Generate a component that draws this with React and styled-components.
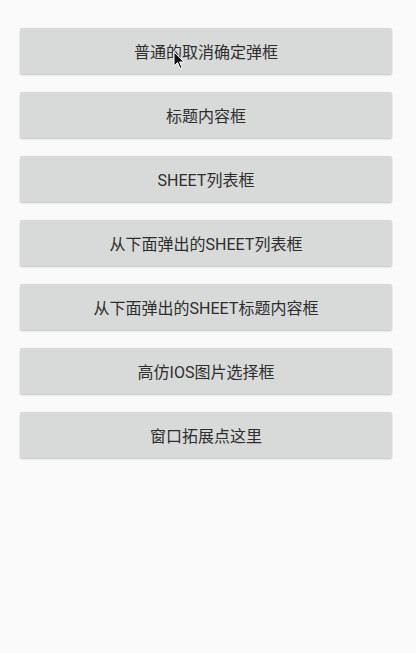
import React from 'react';
import styled, { createGlobalStyle } from 'styled-components';

const GlobalStyle = createGlobalStyle`
  html, body {
    margin: 0;
    padding: 0;
    background: #fafafa;
  }
  body {
    font-family: Roboto, 'Noto Sans CJK SC', sans-serif;
  }
`;

const Page = styled.div`
  position: relative;
  width: 416px;
  height: 653px;
  background: #fafafa;
  box-sizing: border-box;
  padding: 28px 24px 0 20px;
  display: flex;
  flex-direction: column;
  gap: 18px;
`;

const DialogButton = styled.button`
  height: 46px;
  width: 100%;
  border: none;
  border-radius: 2px;
  background: #d8d9d9;
  box-shadow: 0 1px 2px rgba(0, 0, 0, 0.22);
  font-family: Roboto, 'Noto Sans CJK SC', sans-serif;
  font-size: 16px;
  color: #2e2e2e;
  padding: 0;
  cursor: pointer;
`;

const Pointer = styled.svg`
  position: absolute;
  left: 173px;
  top: 51px;
  pointer-events: none;
`;

const labels = [
  '普通的取消确定弹框',
  '标题内容框',
  'SHEET列表框',
  '从下面弹出的SHEET列表框',
  '从下面弹出的SHEET标题内容框',
  '高仿IOS图片选择框',
  '窗口拓展点这里',
];

export default function App() {
  return (
    <>
      <GlobalStyle />
      <Page>
        {labels.map((label) => (
          <DialogButton key={label}>{label}</DialogButton>
        ))}
        <Pointer width="12" height="20" viewBox="0 0 12 20">
          <path d="M1 1 L1 15 L4.5 11.5 L7 17.5 L9 16.6 L6.6 11 L11 11 Z" fill="#111" stroke="#fff" strokeWidth="1" />
        </Pointer>
      </Page>
    </>
  );
}
